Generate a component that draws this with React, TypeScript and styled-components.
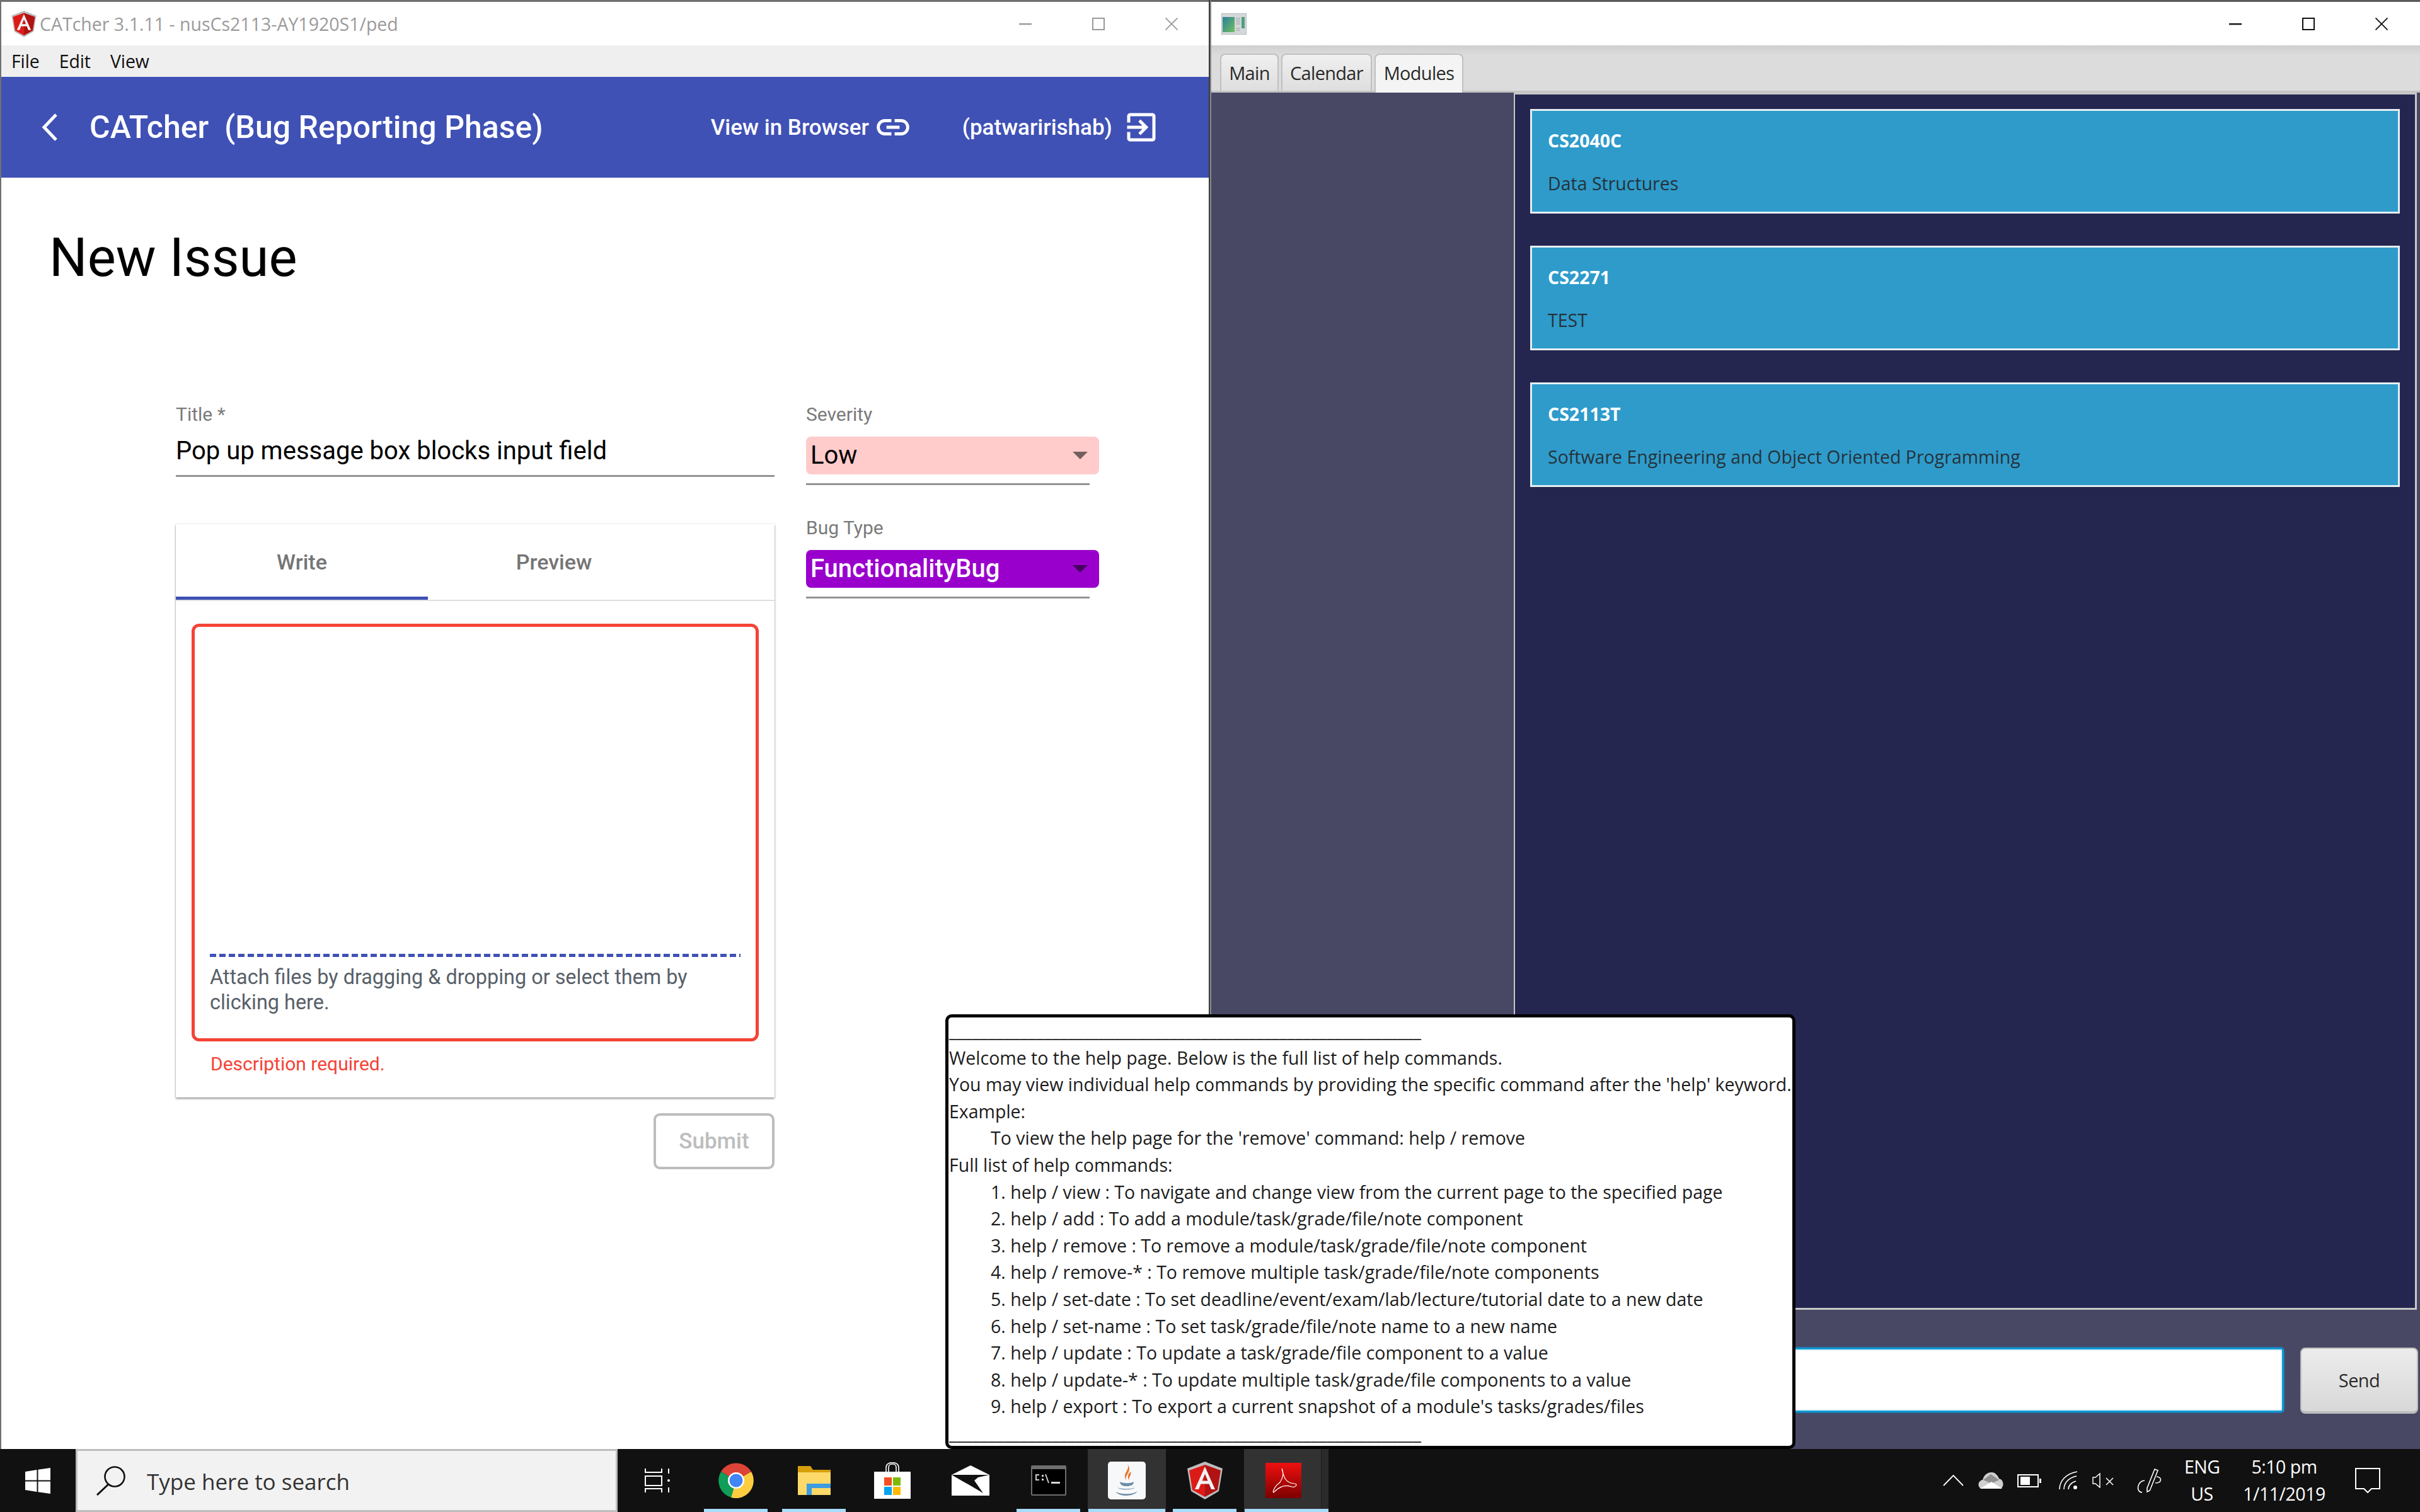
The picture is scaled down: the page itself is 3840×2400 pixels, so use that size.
import React from 'react';
import styled, { createGlobalStyle } from 'styled-components';

const SEGOE = `'Open Sans', 'Noto Sans', sans-serif`;
const ROBOTO = `Roboto, 'Liberation Sans', sans-serif`;

const GlobalStyle = createGlobalStyle`
  html, body { margin: 0; padding: 0; background: #111; }
  * { box-sizing: border-box; }
`;

const Desktop = styled.div`
  position: relative;
  width: 3840px;
  height: 2400px;
  overflow: hidden;
  display: flex;
  flex-direction: column;
`;

const Windows = styled.div`
  display: flex;
  height: 2300px;
`;

/* ---------- left window: CATcher ---------- */

const LeftWindow = styled.div`
  width: 1918px;
  background: #fff;
  border-top: 3px solid #707070;
  border-left: 2px solid #707070;
  display: flex;
  flex-direction: column;
`;

const Divider = styled.div`
  width: 2px;
  background: #3a3a3a;
`;

const TitleBar = styled.div`
  height: 69px;
  display: flex;
  align-items: center;
  background: #fff;
  flex-shrink: 0;
`;

const AppTitle = styled.span`
  font: 400 28.5px ${SEGOE};
  color: #9a9a9a;
  margin-left: 4px;
`;

const IconSlot = styled.span<{ $left: number }>`
  display: inline-flex;
  margin-left: ${(p) => p.$left}px;
`;

const WindowControls = styled.div<{ $right: number }>`
  margin-left: auto;
  margin-right: ${(p) => p.$right}px;
  display: flex;
  align-items: center;
`;

const ControlSlot = styled.span`
  width: 116px;
  display: flex;
  justify-content: center;
`;

const MenuBar = styled.div`
  height: 50px;
  background: #efefef;
  display: flex;
  align-items: center;
  padding-left: 16px;
  gap: 31px;
  font: 400 28.5px ${SEGOE};
  letter-spacing: -0.1px;
  color: #111;
`;

const AppHeader = styled.header`
  height: 160px;
  background: #3f51b5;
  color: #fff;
  display: flex;
  align-items: center;
  padding-left: 64px;
  font-family: ${ROBOTO};
`;

const HeaderTitle = styled.h1`
  margin: 0 0 0 50px;
  font-size: 50px;
  font-weight: 500;
  white-space: pre;
`;

const HeaderLink = styled.span<{ $left: number }>`
  display: flex;
  align-items: center;
  font-size: 35px;
  font-weight: 500;
  margin-left: ${(p) => p.$left}px;
`;

const PageTitle = styled.h2`
  margin: 77px 0 0 76px;
  font: 400 85px/100px ${ROBOTO};
  color: #000;
`;

const Form = styled.div`
  display: flex;
  margin: 181px 0 0 277px;
  gap: 50px;
  font-family: ${ROBOTO};
`;

const MainColumn = styled.div`
  width: 950px;
  display: flex;
  flex-direction: column;
`;

const SideColumn = styled.div`
  width: 466px;
`;

const FieldLabel = styled.div`
  font-size: 30px;
  line-height: 36px;
  color: #7a7a7a;
`;

const TitleInput = styled.div`
  margin-top: 14px;
  height: 67px;
  font-size: 40px;
  line-height: 52px;
  color: #000;
  border-bottom: 3px solid #949494;
`;

const Select = styled.div<{ $bg: string; $fg: string; $weight: number }>`
  width: 465px;
  height: 60px;
  margin-top: 17px;
  border-radius: 8px;
  background: ${(p) => p.$bg};
  color: ${(p) => p.$fg};
  font-size: 40px;
  font-weight: ${(p) => p.$weight};
  line-height: 60px;
  padding: 0 18px 0 7px;
  display: flex;
  align-items: center;
  justify-content: space-between;
`;

const SelectArrow = styled.span`
  width: 0;
  height: 0;
  border-left: 12.5px solid transparent;
  border-right: 12.5px solid transparent;
  border-top: 12px solid rgba(0, 0, 0, 0.54);
`;

const SelectLine = styled.div<{ $after: number }>`
  width: 450px;
  height: 3px;
  background: #949494;
  margin: 14px 0 ${(p) => p.$after}px;
`;

const TabsCard = styled.div`
  margin-top: 75px;
  height: 910px;
  background: #fff;
  box-shadow: 0 2px 3px rgba(0, 0, 0, 0.4), 0 0 3px rgba(0, 0, 0, 0.12);
  display: flex;
  flex-direction: column;
`;

const TabHeader = styled.div`
  height: 122px;
  display: flex;
  border-bottom: 2px solid #e0e0e0;
`;

const TabLabel = styled.div<{ $active?: boolean }>`
  width: 400px;
  padding-bottom: 1px;
  display: flex;
  align-items: center;
  justify-content: center;
  font-size: 34px;
  font-weight: 500;
  color: #757575;
  box-shadow: ${(p) => (p.$active ? 'inset 0 -5px 0 #3f51b5' : 'none')};
`;

const TabBody = styled.div`
  padding: 36px 25px 0;
`;

const DropBox = styled.div`
  height: 663px;
  border: 5px solid #f44336;
  border-radius: 12px;
  padding: 0 24px 35px;
  display: flex;
  flex-direction: column;
  justify-content: flex-end;
`;

const DashedLine = styled.div`
  height: 5px;
  margin-bottom: 12px;
  background: repeating-linear-gradient(90deg, #3f51b5 0 10px, transparent 10px 15px);
`;

const DropHint = styled.div`
  font-size: 32.4px;
  line-height: 40px;
  margin-bottom: 2px;
  color: #586069;
`;

const ErrorText = styled.div`
  margin: 16px 0 0 30px;
  font-size: 30px;
  line-height: 40px;
  color: #f44336;
`;

const SubmitButton = styled.button`
  align-self: flex-end;
  margin-top: 25px;
  width: 192px;
  height: 89px;
  background: #fff;
  border: 4px solid #bdbdbd;
  border-radius: 10px;
  color: #bdbdbd;
  font: 500 35px ${ROBOTO};
`;

/* ---------- right window: module tracker ---------- */

const RightWindow = styled.div`
  flex: 1;
  border-top: 3px solid #5a5a5a;
  border-left: 2px solid #8a8a8a;
  background: #484865;
  display: flex;
  flex-direction: column;
`;

const TabBar = styled.div`
  height: 75px;
  background: linear-gradient(#cfcfcf 0, #dcdcdc 16px);
  border-bottom: 3px solid #c4c4c4;
  display: flex;
  align-items: flex-end;
  padding-left: 14px;
  gap: 4px;
`;

const AppTab = styled.div<{ $active?: boolean; $w: number }>`
  width: ${(p) => p.$w}px;
  height: ${(p) => (p.$active ? 62 : 59)}px;
  margin-bottom: ${(p) => (p.$active ? -3 : 0)}px;
  padding-bottom: ${(p) => (p.$active ? 3 : 0)}px;
  border: 2px solid #c0c0c0;
  border-bottom: none;
  border-radius: 8px 8px 0 0;
  background: ${(p) => (p.$active ? '#f4f4f4' : 'linear-gradient(#f0f0f0, #dedede)')};
  display: flex;
  align-items: center;
  justify-content: center;
  font: 400 29px ${SEGOE};
  letter-spacing: -0.7px;
  color: #2a2a2a;
`;

const WorkArea = styled.div`
  flex: 1;
  display: flex;
`;

const SidePanel = styled.div`
  width: 480px;
`;

const ModulePane = styled.div`
  width: 1433px;
  background: #25264f;
  border-left: 2px solid #c8c8c8;
  border-top: 3px solid #c8c8c8;
  border-right: 3px solid #c8c8c8;
  border-bottom: 3px solid #c8c8c8;
  padding: 23px 24px 0 24px;
  display: flex;
  flex-direction: column;
  gap: 51px;
`;

const ModuleCard = styled.div`
  height: 166px;
  background: #2e9bcb;
  border: 3px solid #e6eef2;
  padding: 27px 25px;
  font-family: ${SEGOE};
  font-size: 28.5px;
  line-height: 40px;
`;

const ModuleCode = styled.div`
  color: #fff;
  font-weight: 700;
`;

const ModuleName = styled.div`
  margin-top: 28px;
  color: #263238;
`;

const CommandRow = styled.div`
  height: 221px;
  display: flex;
  align-items: flex-start;
  padding: 60px 3px 0 30px;
  gap: 26px;
`;

const CommandInput = styled.div`
  flex: 1;
  height: 103px;
  background: #fff;
  border: 3px solid #0d9ad6;
  border-radius: 5px;
  box-shadow: inset 0 0 0 2px #e0f2f8, 0 0 3px #0d9ad6;
`;

const SendButton = styled.button`
  width: 187px;
  height: 105px;
  border: 2px solid #bdbdbd;
  border-bottom-width: 4px;
  border-radius: 8px;
  background: linear-gradient(#ececec, #d8d8d8);
  font: 400 29px ${SEGOE};
  letter-spacing: -0.6px;
  color: #2a2a2a;
`;

/* ---------- help popup ---------- */

const HelpPopup = styled.div`
  position: absolute;
  left: 1500px;
  top: 1610px;
  width: 1349px;
  height: 690px;
  padding: 0 0 0 1px;
  background: #fff;
  border: 5px solid #000;
  border-radius: 10px;
  overflow: hidden;
  font: 400 28.5px/42.6px ${SEGOE};
  color: #1c1c1c;
  white-space: pre;
`;

const HelpLine = styled.div<{ $indent?: boolean }>`
  padding-left: ${(p) => (p.$indent ? 66 : 0)}px;
  height: 42.6px;
`;

/* ---------- taskbar ---------- */

const Taskbar = styled.div`
  height: 100px;
  background: #111;
  display: flex;
  align-items: stretch;
`;

const StartButton = styled.div`
  width: 120px;
  display: flex;
  align-items: center;
  justify-content: center;
`;

const SearchBox = styled.div`
  width: 860px;
  background: #f2f2f2;
  border: 3px solid #bdbdbd;
  display: flex;
  align-items: center;
  padding-left: 29px;
  font: 400 35px ${SEGOE};
  color: #333;
`;

const SearchText = styled.span`
  margin: 3px 0 0 33px;
`;

const TaskView = styled.div`
  width: 126px;
  display: flex;
  align-items: center;
  justify-content: center;
`;

const TaskSlot = styled.div<{ $state?: 'open' | 'active'; $stacked?: boolean }>`
  position: relative;
  width: 124px;
  display: flex;
  align-items: center;
  justify-content: center;
  background: ${(p) => (p.$state === 'active' ? '#323232' : 'transparent')};

  &::before {
    content: '';
    display: ${(p) => (p.$stacked ? 'block' : 'none')};
    position: absolute;
    top: 0;
    bottom: 0;
    right: -10px;
    width: 11px;
    background: #2a2a2a;
    border-left: 1px solid #1c1c1c;
  }

  &::after {
    content: '';
    display: ${(p) => (p.$state ? 'block' : 'none')};
    position: absolute;
    bottom: 0;
    left: ${(p) => (p.$state === 'active' ? 1 : 11)}px;
    right: ${(p) => (p.$stacked ? -10 : p.$state === 'active' ? 1 : 12)}px;
    height: 5px;
    background: #a8dcfa;
  }
`;

const Tray = styled.div`
  margin-left: auto;
  display: flex;
  align-items: center;
  color: #fff;
  font: 400 28.5px/43px ${SEGOE};
  letter-spacing: -0.5px;
  padding-right: 63px;
`;

const TrayItem = styled.span<{ $gap: number }>`
  display: inline-flex;
  margin-left: ${(p) => p.$gap}px;
`;

const TrayText = styled.div<{ $gap: number; $w: number }>`
  width: ${(p) => p.$w}px;
  margin-left: ${(p) => p.$gap}px;
  text-align: center;
`;

/* ---------- drawings ---------- */

const AngularLogo = ({ size }: { size: number }) => (
  <svg width={size} height={size} viewBox="0 0 60 60">
    <polygon points="30,0 58,11 52,47 30,60 8,47 2,11" fill="#bdbdbd" />
    <polygon points="30,5 5,14 10,45 30,56" fill="#dd1b16" />
    <polygon points="30,5 55,14 50,45 30,56" fill="#b01312" />
    <path d="M30 8 L14 44 H20 L23.5 35.5 H36.5 L40 44 H46 Z M25.5 30.5 L30 19.5 L34.5 30.5 Z" fill="#f2f2f2" fillRule="evenodd" />
  </svg>
);

const WinCaption = ({ color, right }: { color: string; right: number }) => (
  <WindowControls $right={right}>
    <ControlSlot>
      <svg width="20" height="20" viewBox="0 0 20 20">
        <rect y="9" width="20" height="2.4" fill={color} />
      </svg>
    </ControlSlot>
    <ControlSlot>
      <svg width="20" height="20" viewBox="0 0 20 20">
        <rect x="1" y="1" width="18" height="18" fill="none" stroke={color} strokeWidth="2" />
      </svg>
    </ControlSlot>
    <ControlSlot>
      <svg width="20" height="20" viewBox="0 0 20 20">
        <path d="M0.5 0.5 L19.5 19.5 M19.5 0.5 L0.5 19.5" stroke={color} strokeWidth="1.8" />
      </svg>
    </ControlSlot>
  </WindowControls>
);

const WindowThumb = () => (
  <svg width="40" height="34" viewBox="0 0 40 34">
    <rect width="40" height="34" fill="#d4d8da" stroke="#9a9a9a" />
    <defs>
      <linearGradient id="thumb" x1="0" y1="0" x2="1" y2="1">
        <stop offset="0" stopColor="#2b7f9c" />
        <stop offset="1" stopColor="#6fbf5e" />
      </linearGradient>
    </defs>
    <rect x="2" y="6" width="19" height="24" fill="url(#thumb)" />
    <path d="M23 8h7M23 11h7M23 14h7M23 17h7M23 24h7M23 27h7" stroke="#9aa0a4" strokeWidth="1" />
    <rect x="32" y="6" width="5" height="18" fill="#4f9f7f" />
  </svg>
);

const ChromeLogo = () => (
  <svg width="56" height="56" viewBox="0 0 56 56">
    <path d="M28 28 L4 14 A28 28 0 0 1 52 14 Z" fill="#db4437" />
    <path d="M28 28 L4 14 A28 28 0 0 0 20 55 Z" fill="#0f9d58" />
    <path d="M28 28 L52 14 A28 28 0 0 1 20 55 Z" fill="#ffcd40" />
    <circle cx="28" cy="28" r="13" fill="#fff" />
    <circle cx="28" cy="28" r="10.5" fill="#4285f4" />
  </svg>
);

const FolderIcon = () => (
  <svg width="52" height="46" viewBox="0 0 52 46">
    <path d="M0 0 H20 L24 6 H52 V46 H0 Z" fill="#d79f0a" />
    <rect y="10" width="52" height="36" fill="#fcd968" />
    <path d="M14 46 V28 H52 V35 H22 V46 Z" fill="#3d9be0" />
  </svg>
);

const StoreIcon = () => (
  <svg width="58" height="58" viewBox="0 0 58 58">
    <path d="M19 15 V8 C19 -2 39 -2 39 8 V15 M23 15 V8 C23 1 35 1 35 8 V15" fill="none" stroke="#fff" strokeWidth="1.6" />
    <path d="M0 15 H58 V58 H0 Z" fill="#fff" />
    <rect x="16" y="24" width="12" height="13" fill="#f25022" />
    <rect x="30" y="24" width="12" height="13" fill="#7fba00" />
    <rect x="16" y="39" width="12" height="13" fill="#00a4ef" />
    <rect x="30" y="39" width="12" height="13" fill="#ffb900" />
  </svg>
);

const MailIcon = () => (
  <svg width="60" height="48" viewBox="0 0 60 48">
    <path d="M30 0 L60 15 V48 H0 V15 Z" fill="#fff" />
    <path d="M0 15 H60 L42 19 L36 24 L50 44 L28 31 L12 22 Z" fill="#111" />
  </svg>
);

const CmdIcon = () => (
  <svg width="56" height="48" viewBox="0 0 56 48">
    <rect width="56" height="48" rx="2" fill="#6e6e6e" />
    <rect x="2" y="6" width="52" height="40" fill="#000" />
    <path d="M7 14h6v2H9v6h4v2H7zM17 15h3v3h-3zM17 21h3v3h-3zM24 14l5 14h-2l-5-14z" fill="#cfcfcf" />
    <rect x="32" y="26" width="14" height="3" fill="#d8d8d8" />
  </svg>
);

const JavaIcon = () => (
  <svg width="60" height="60" viewBox="0 0 60 60">
    <rect width="60" height="60" rx="5" fill="#f6f8fa" />
    <path d="M31 4 C36 13 22 18 29 30 C26 20 40 16 31 4 Z" fill="#e8762d" />
    <path d="M36 16 C32 20 30 24 34 30 C32 24 38 22 36 16 Z" fill="#e8762d" />
    <path d="M19 32 C24 35 36 35 41 32 C41 37 36 39 30 39 C24 39 19 37 19 32 Z" fill="#6d8ca5" />
    <path d="M15 41 C20 44 38 44 43 41 C40 45 20 46 15 41 Z M12 48 C24 53 40 52 47 47 C42 55 20 57 12 48 Z" fill="#6d8ca5" />
  </svg>
);

const AcrobatIcon = () => (
  <svg width="57" height="56" viewBox="0 0 57 56">
    <defs>
      <linearGradient id="pdf" x1="0" y1="0" x2="0" y2="1">
        <stop offset="0" stopColor="#f01010" />
        <stop offset="1" stopColor="#7c0000" />
      </linearGradient>
    </defs>
    <rect width="57" height="56" fill="url(#pdf)" />
    <path d="M26 9 C29 22 31 32 46 33 C52 33 48 40 42 38 C32 34 22 38 14 46 C10 50 13 38 22 32 C27 26 30 16 26 9 Z" fill="none" stroke="#fff" strokeWidth="1.2" />
  </svg>
);

const HELP_RULE = '_'.repeat(60);

const helpLines: { text: string; indent?: boolean }[] = [
  { text: HELP_RULE },
  { text: 'Welcome to the help page. Below is the full list of help commands.' },
  { text: "You may view individual help commands by providing the specific command after the 'help' keyword." },
  { text: 'Example:' },
  { text: "To view the help page for the 'remove' command: help / remove", indent: true },
  { text: 'Full list of help commands:' },
  { text: '1. help / view : To navigate and change view from the current page to the specified page', indent: true },
  { text: '2. help / add : To add a module/task/grade/file/note component', indent: true },
  { text: '3. help / remove : To remove a module/task/grade/file/note component', indent: true },
  { text: '4. help / remove-* : To remove multiple task/grade/file/note components', indent: true },
  { text: '5. help / set-date : To set deadline/event/exam/lab/lecture/tutorial date to a new date', indent: true },
  { text: '6. help / set-name : To set task/grade/file/note name to a new name', indent: true },
  { text: '7. help / update : To update a task/grade/file component to a value', indent: true },
  { text: '8. help / update-* : To update multiple task/grade/file components to a value', indent: true },
  { text: "9. help / export : To export a current snapshot of a module's tasks/grades/files", indent: true },
  { text: HELP_RULE },
];

const modules = [
  { code: 'CS2040C', name: 'Data Structures' },
  { code: 'CS2271', name: 'TEST' },
  { code: 'CS2113T', name: 'Software Engineering and Object Oriented Programming' },
];

export default function App() {
  return (
    <Desktop>
      <GlobalStyle />
      <Windows>
        <LeftWindow>
          <TitleBar>
            <IconSlot $left={15}>
              <AngularLogo size={42} />
            </IconSlot>
            <AppTitle>CATcher 3.1.11 - nusCs2113-AY1920S1/ped</AppTitle>
            <WinCaption color="#999" right={1} />
          </TitleBar>
          <MenuBar>
            <span>File</span>
            <span>Edit</span>
            <span>View</span>
          </MenuBar>
          <AppHeader>
            <svg width="26" height="44" viewBox="0 0 26 44">
              <polyline points="23,2 4,22 23,42" fill="none" stroke="#fff" strokeWidth="5" />
            </svg>
            <HeaderTitle>CATcher  (Bug Reporting Phase)</HeaderTitle>
            <HeaderLink $left={266}>
              View in Browser
              <IconSlot $left={7}>
                <svg width="62" height="62" viewBox="0 0 24 24" fill="#fff">
                  <path d="M3.9 12c0-1.71 1.39-3.1 3.1-3.1h4V7H7c-2.76 0-5 2.24-5 5s2.24 5 5 5h4v-1.9H7c-1.71 0-3.1-1.39-3.1-3.1zM8 13h8v-2H8v2zm9-6h-4v1.9h4c1.71 0 3.1 1.39 3.1 3.1s-1.39 3.1-3.1 3.1h-4V17h4c2.76 0 5-2.24 5-5s-2.24-5-5-5z" />
                </svg>
              </IconSlot>
            </HeaderLink>
            <HeaderLink $left={79}>
              (patwaririshab)
              <IconSlot $left={16}>
                <svg width="60" height="60" viewBox="0 0 24 24" fill="#fff">
                  <path d="M10.09 15.59L11.5 17l5-5-5-5-1.41 1.41L12.67 11H3v2h9.67l-2.58 2.59zM19 3H5c-1.11 0-2 .9-2 2v4h2V5h14v14H5v-4H3v4c0 1.1.89 2 2 2h14c1.1 0 2-.9 2-2V5c0-1.1-.9-2-2-2z" />
                </svg>
              </IconSlot>
            </HeaderLink>
          </AppHeader>
          <PageTitle>New Issue</PageTitle>
          <Form>
            <MainColumn>
              <FieldLabel>Title *</FieldLabel>
              <TitleInput>Pop up message box blocks input field</TitleInput>
              <TabsCard>
                <TabHeader>
                  <TabLabel $active>Write</TabLabel>
                  <TabLabel>Preview</TabLabel>
                </TabHeader>
                <TabBody>
                  <DropBox>
                    <DashedLine />
                    <DropHint>Attach files by dragging &amp; dropping or select them by clicking here.</DropHint>
                  </DropBox>
                  <ErrorText>Description required.</ErrorText>
                </TabBody>
              </TabsCard>
              <SubmitButton>Submit</SubmitButton>
            </MainColumn>
            <SideColumn>
              <FieldLabel>Severity</FieldLabel>
              <Select $bg="#ffcccb" $fg="#000" $weight={400}>
                Low
                <SelectArrow />
              </Select>
              <SelectLine $after={50} />
              <FieldLabel>Bug Type</FieldLabel>
              <Select $bg="#9900cc" $fg="#fff" $weight={500}>
                FunctionalityBug
                <SelectArrow />
              </Select>
              <SelectLine $after={0} />
            </SideColumn>
          </Form>
        </LeftWindow>
        <Divider />
        <RightWindow>
          <TitleBar>
            <IconSlot $left={16}>
              <WindowThumb />
            </IconSlot>
            <WinCaption color="#111" right={3} />
          </TitleBar>
          <TabBar>
            <AppTab $w={93}>Main</AppTab>
            <AppTab $w={144}>Calendar</AppTab>
            <AppTab $w={141} $active>
              Modules
            </AppTab>
          </TabBar>
          <WorkArea>
            <SidePanel />
            <ModulePane>
              {modules.map((m) => (
                <ModuleCard key={m.code}>
                  <ModuleCode>{m.code}</ModuleCode>
                  <ModuleName>{m.name}</ModuleName>
                </ModuleCard>
              ))}
            </ModulePane>
          </WorkArea>
          <CommandRow>
            <CommandInput />
            <SendButton>Send</SendButton>
          </CommandRow>
        </RightWindow>
      </Windows>
      <Taskbar>
        <StartButton>
          <svg width="40" height="41" viewBox="0 0 40 41" fill="#fff">
            <path d="M0 6 L18.5 3 V19.5 H0 Z M20.5 2.7 L40 0 V19.5 H20.5 Z M0 21.5 H18.5 V38 L0 35 Z M20.5 21.5 H40 V41 L20.5 38.3 Z" />
          </svg>
        </StartButton>
        <SearchBox>
          <svg width="48" height="48" viewBox="0 0 48 48">
            <circle cx="30" cy="18" r="15.5" fill="none" stroke="#111" strokeWidth="2.6" />
            <path d="M20 30 L2 47" stroke="#111" strokeWidth="3" />
          </svg>
          <SearchText>Type here to search</SearchText>
        </SearchBox>
        <TaskView>
          <svg width="40" height="38" viewBox="0 0 40 38" fill="none" stroke="#fff" strokeWidth="2">
            <path d="M1 0 V6 H27 V0 M1 38 V32 H27 V38" />
            <rect x="1" y="12" width="26" height="15" />
            <path d="M38 0 V8 M38 30 V38" />
            <circle cx="38" cy="19" r="2" fill="#fff" stroke="none" />
          </svg>
        </TaskView>
        <TaskSlot $state="open">
          <ChromeLogo />
        </TaskSlot>
        <TaskSlot $state="open">
          <FolderIcon />
        </TaskSlot>
        <TaskSlot>
          <StoreIcon />
        </TaskSlot>
        <TaskSlot>
          <MailIcon />
        </TaskSlot>
        <TaskSlot $state="open">
          <CmdIcon />
        </TaskSlot>
        <TaskSlot $state="active">
          <JavaIcon />
        </TaskSlot>
        <TaskSlot $state="open">
          <AngularLogo size={60} />
        </TaskSlot>
        <TaskSlot $state="active" $stacked>
          <AcrobatIcon />
        </TaskSlot>
        <Tray>
          <svg width="33" height="18" viewBox="0 0 33 18">
            <polyline points="1,17 16.5,1 32,17" fill="none" stroke="#fff" strokeWidth="1.8" />
          </svg>
          <TrayItem $gap={23}>
            <svg width="40" height="26" viewBox="0 0 40 26">
              <path d="M4 26 C-2 22 0 13 7 12 C9 4 15 0 21 0 C27 0 31 5 33 10 C40 11 42 22 36 26 Z" fill="#cfcfcf" />
              <path d="M8 12 L20 3 L33 12 L21 18 Z" fill="#8f8f8f" />
              <path d="M3 26 L21 15 L38 26 Z" fill="#fff" />
            </svg>
          </TrayItem>
          <TrayItem $gap={22}>
            <svg width="38" height="21" viewBox="0 0 38 21">
              <rect x="1" y="1" width="32" height="19" fill="none" stroke="#fff" strokeWidth="2" />
              <rect x="5" y="4" width="15" height="13" fill="#fff" />
              <rect x="35" y="7" width="3" height="7" fill="#fff" />
            </svg>
          </TrayItem>
          <TrayItem $gap={27}>
            <svg width="31" height="30" viewBox="0 0 31 30" fill="none" stroke="#fff" strokeWidth="1.6">
              <path d="M2 29 C2 16 12 4 30 1" />
              <path d="M9 29 C9 20 15 11 29 8" />
              <path d="M16 29 C16 24 20 18 28 16" />
              <circle cx="27" cy="26" r="3" fill="#fff" stroke="none" />
            </svg>
          </TrayItem>
          <TrayItem $gap={23}>
            <svg width="36" height="24" viewBox="0 0 36 24" fill="none" stroke="#fff" strokeWidth="1.5">
              <path d="M1 7 H5 L12 1 V23 L5 17 H1 Z" />
              <path d="M22 8 L33 19 M33 8 L22 19" />
            </svg>
          </TrayItem>
          <TrayItem $gap={33}>
            <svg width="41" height="40" viewBox="0 0 41 40" fill="none" stroke="#fff" strokeWidth="1.6">
              <path d="M22 36 L18 38 L18 32 L30 2 L35 4 L23 34 Z" />
              <path d="M33 14 C42 14 42 24 31 24" />
              <path d="M14 20 C3 20 -1 38 10 39" />
            </svg>
          </TrayItem>
          <TrayText $gap={36} $w={56}>
            ENG
            <br />
            US
          </TrayText>
          <TrayText $gap={36} $w={133}>
            5:10 pm
            <br />
            1/11/2019
          </TrayText>
          <TrayItem $gap={46}>
            <svg width="40" height="40" viewBox="0 0 40 40">
              <path d="M1 1 H39 V33 H26 L20 39 L14 33 H1 Z" fill="none" stroke="#fff" strokeWidth="2" />
            </svg>
          </TrayItem>
        </Tray>
      </Taskbar>
      <HelpPopup>
        {helpLines.map((line, i) => (
          <HelpLine key={i} $indent={line.indent}>
            {line.text}
          </HelpLine>
        ))}
      </HelpPopup>
    </Desktop>
  );
}
